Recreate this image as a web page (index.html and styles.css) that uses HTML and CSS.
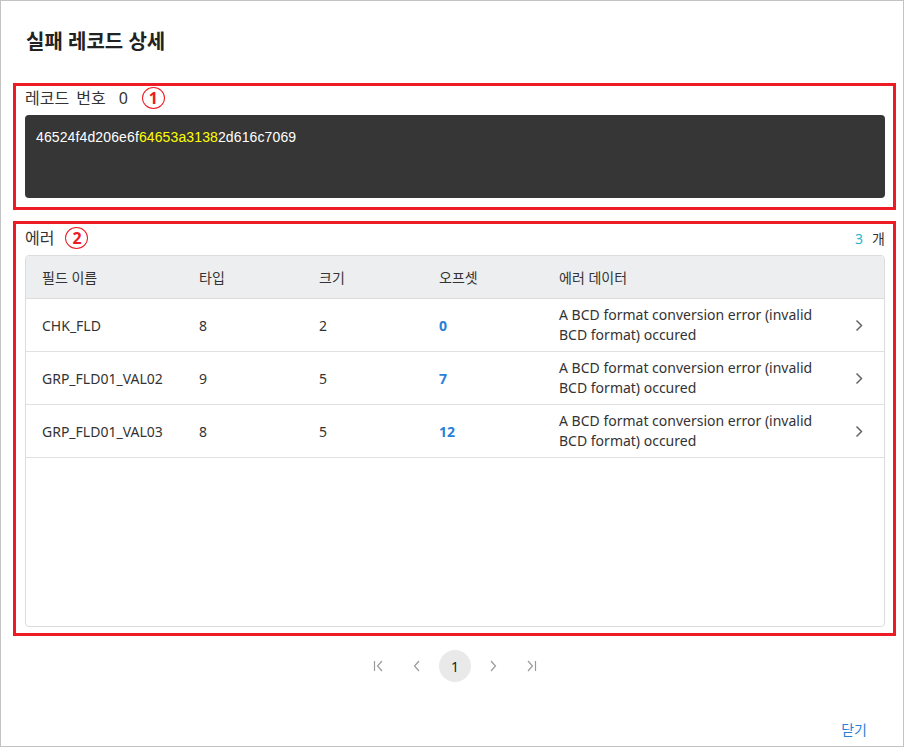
FILE: index.html
```html
<!DOCTYPE html>
<html lang="ko">
<head>
<meta charset="utf-8">
<title>실패 레코드 상세</title>
<link rel="stylesheet" href="styles.css">
</head>
<body>
<div class="dialog">
  <h1 class="title">실패 레코드 상세</h1>

  <section class="box box-record">
    <div class="label"><span class="label-text">레코드 번호</span><span class="rec-no">0</span><span class="mark mark-1">1</span></div>
    <div class="code">46524f4d206e6f<span class="hl">64653a3138</span>2d616c7069</div>
  </section>

  <section class="box box-error">
    <div class="label-row">
      <div class="label">에러<span class="mark mark-2">2</span></div>
      <div class="count"><span class="count-n">3</span>개</div>
    </div>
    <div class="table">
      <div class="tr th">
        <div class="td">필드 이름</div>
        <div class="td">타입</div>
        <div class="td">크기</div>
        <div class="td">오프셋</div>
        <div class="td">에러 데이터</div>
        <div class="td"></div>
      </div>
      <div class="tr">
        <div class="td">CHK_FLD</div>
        <div class="td">8</div>
        <div class="td">2</div>
        <div class="td offset">0</div>
        <div class="td msg">A BCD format conversion error (invalid BCD format) occured</div>
        <div class="td arrow"><svg width="8" height="13" viewBox="0 0 8 13"><path d="M1.5 1.5 L6.5 6.5 L1.5 11.5" fill="none" stroke="#666" stroke-width="1.5"/></svg></div>
      </div>
      <div class="tr">
        <div class="td">GRP_FLD01_VAL02</div>
        <div class="td">9</div>
        <div class="td">5</div>
        <div class="td offset">7</div>
        <div class="td msg">A BCD format conversion error (invalid BCD format) occured</div>
        <div class="td arrow"><svg width="8" height="13" viewBox="0 0 8 13"><path d="M1.5 1.5 L6.5 6.5 L1.5 11.5" fill="none" stroke="#666" stroke-width="1.5"/></svg></div>
      </div>
      <div class="tr">
        <div class="td">GRP_FLD01_VAL03</div>
        <div class="td">8</div>
        <div class="td">5</div>
        <div class="td offset">12</div>
        <div class="td msg">A BCD format conversion error (invalid BCD format) occured</div>
        <div class="td arrow"><svg width="8" height="13" viewBox="0 0 8 13"><path d="M1.5 1.5 L6.5 6.5 L1.5 11.5" fill="none" stroke="#666" stroke-width="1.5"/></svg></div>
      </div>
    </div>
  </section>

  <nav class="pager">
    <span class="pg"><svg width="12" height="12" viewBox="0 0 12 12"><path d="M1.5 1 V11 M9 1 L4.5 6 L9 11" fill="none" stroke="#9a9a9a" stroke-width="1.2"/></svg></span>
    <span class="pg"><svg width="12" height="12" viewBox="0 0 12 12"><path d="M8 1 L3.5 6 L8 11" fill="none" stroke="#9a9a9a" stroke-width="1.2"/></svg></span>
    <span class="pg pg-current">1</span>
    <span class="pg"><svg width="12" height="12" viewBox="0 0 12 12"><path d="M4 1 L8.5 6 L4 11" fill="none" stroke="#9a9a9a" stroke-width="1.2"/></svg></span>
    <span class="pg"><svg width="12" height="12" viewBox="0 0 12 12"><path d="M3 1 L7.5 6 L3 11 M10.5 1 V11" fill="none" stroke="#9a9a9a" stroke-width="1.2"/></svg></span>
  </nav>

  <div class="footer">
    <button class="close" type="button">닫기</button>
  </div>
</div>
</body>
</html>
```

FILE: styles.css
```css
* { box-sizing: border-box; }
html, body { margin: 0; padding: 0; background: #fff; }
body {
  font-family: "Noto Sans", "Noto Sans CJK KR", sans-serif;
  color: #333;
}
.dialog {
  width: 904px;
  height: 747px;
  border: 1px solid #c3c3c3;
  padding: 27px 7px 0 12px;
  display: flex;
  flex-direction: column;
}
.title {
  margin: 0 0 0 13px;
  font-size: 20px;
  line-height: 28px;
  font-weight: 700;
  color: #222;
}
.box {
  border: 3px solid #ed1c24;
  padding: 0 8px 0 9px;
}
.box-record {
  margin-top: 27px;
  height: 127px;
}
.box-error {
  margin-top: 11px;
  height: 415px;
  padding-top: 2px;
}
.label {
  font-size: 16px;
  line-height: 24px;
  height: 24px;
  color: #333;
  display: flex;
  align-items: center;
}
.label-text { word-spacing: 3px; }
.rec-no { margin-left: 13px; }
.mark {
  display: inline-flex;
  align-items: center;
  justify-content: center;
  width: 23px;
  height: 22px;
  border: 1.3px solid #ed1c24;
  border-radius: 50%;
  color: #ed1c24;
  font-weight: 700;
  font-size: 16px;
  line-height: 1;
}
.mark-1 { margin-left: 14px; }
.mark-2 { margin-left: 11px; }
.code {
  margin-top: 5px;
  height: 83px;
  background: #363636;
  border-radius: 4px;
  color: #fff;
  font-family: "Liberation Sans", "Noto Sans", sans-serif;
  font-size: 14px;
  letter-spacing: 0.12px;
  line-height: 20px;
  padding: 12px 11px;
}
.hl { color: #ffff00; }
.label-row {
  display: flex;
  justify-content: space-between;
  align-items: center;
}
.count {
  font-size: 14px;
  color: #333;
  padding-right: 0;
}
.count-n {
  color: #2ab5cc;
  margin-right: 9px;
}
.table {
  margin-top: 5px;
  height: 372px;
  border: 1px solid #dcdcdc;
  border-radius: 4px;
  overflow: hidden;
}
.tr {
  display: grid;
  grid-template-columns: 157px 120px 120px 120px 1fr 44px;
  align-items: center;
  height: 53px;
  border-bottom: 1px solid #e0e0e0;
  font-size: 14px;
  color: #333;
}
.th {
  height: 43px;
  background: #eceef0;
  border-bottom: 1px solid #dcdcdc;
}
.td {
  padding: 0 16px;
}
.msg {
  line-height: 20px;
  padding-right: 20px;
}
.offset {
  color: #2a7fd8;
  font-weight: 700;
}
.arrow {
  padding: 0 0 0 15px;
  display: flex;
  align-items: center;
}
.pager {
  margin-top: 14px;
  display: flex;
  justify-content: center;
  gap: 6px;
  padding-left: 1px;
}
.pg {
  width: 32px;
  height: 32px;
  display: flex;
  align-items: center;
  justify-content: center;
  border-radius: 50%;
  font-size: 14px;
  color: #222;
}
.pg-current { background: #e9e9e9; }
.footer {
  margin-top: auto;
  height: 26px;
  display: flex;
  justify-content: flex-end;
  align-items: flex-start;
  padding-right: 29px;
}
.close {
  background: none;
  border: none;
  padding: 0;
  font-family: inherit;
  font-size: 14px;
  line-height: 20px;
  color: #2a7fd8;
  cursor: pointer;
}
```
